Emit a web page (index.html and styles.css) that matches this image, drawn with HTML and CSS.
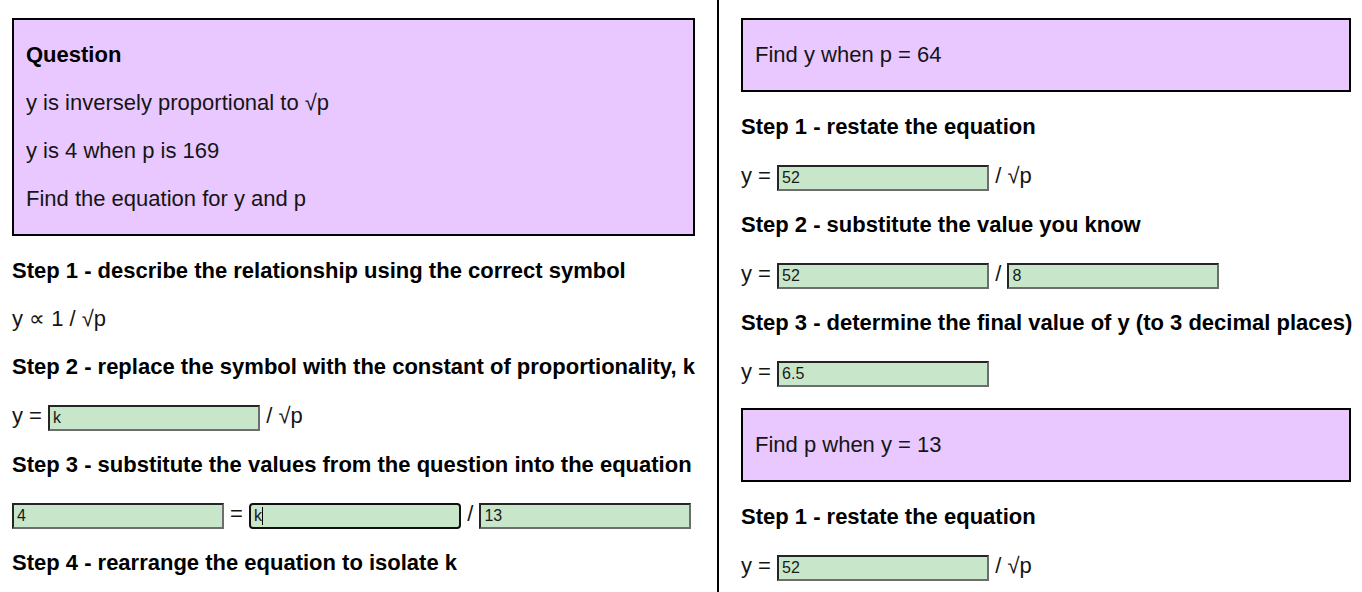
FILE: index.html
```html
<!DOCTYPE html>
<html>
<head>
<meta charset="utf-8">
<title>Inverse proportion</title>
<link rel="stylesheet" href="styles.css">
</head>
<body>
<div class="page">
  <div class="col col-left">
    <div class="box">
      <p class="title">Question</p>
      <p>y is inversely proportional to √p</p>
      <p>y is 4 when p is 169</p>
      <p>Find the equation for y and p</p>
    </div>
    <p class="step">Step 1 - describe the relationship using the correct symbol</p>
    <p>y ∝ 1 / √p</p>
    <p class="step">Step 2 - replace the symbol with the constant of proportionality, k</p>
    <p class="row">y = <input class="field" type="text" value="k"> / √p</p>
    <p class="step">Step 3 - substitute the values from the question into the equation</p>
    <p class="row"><input class="field" type="text" value="4"> = <span class="wrap"><input class="field focus" type="text" value="k"><span class="caret"></span></span> / <input class="field" type="text" value="13"></p>
    <p class="step">Step 4 - rearrange the equation to isolate k</p>
  </div>
  <div class="divider"></div>
  <div class="col col-right">
    <div class="box">
      <p>Find y when p = 64</p>
    </div>
    <p class="step">Step 1 - restate the equation</p>
    <p class="row">y = <input class="field" type="text" value="52"> / √p</p>
    <p class="step">Step 2 - substitute the value you know</p>
    <p class="row">y = <input class="field" type="text" value="52"> / <input class="field" type="text" value="8"></p>
    <p class="step">Step 3 - determine the final value of y (to 3 decimal places)</p>
    <p class="row">y = <input class="field" type="text" value="6.5"></p>
    <div class="box">
      <p>Find p when y = 13</p>
    </div>
    <p class="step">Step 1 - restate the equation</p>
    <p class="row">y = <input class="field" type="text" value="52"> / √p</p>
  </div>
</div>
</body>
</html>
```

FILE: styles.css
```css
html, body {
  margin: 0;
  padding: 0;
  background: #fff;
}
body {
  font-family: "Liberation Sans", Arial, sans-serif;
  font-size: 22px;
  line-height: 26px;
  color: #151515;
  overflow: hidden;
}
.page {
  display: flex;
  height: 592px;
  overflow: hidden;
}
.col {
  padding-top: 18px;
  flex: none;
}
.col-left {
  width: 683px;
  margin-left: 12px;
}
.col-right {
  width: 610px;
}
.divider {
  flex: none;
  width: 2px;
  background: #000;
  margin: 0 22px;
}
.box {
  background: #e9c8ff;
  border: 2px solid #000;
  padding: 0 12px;
}
.box p {
  margin: 22px 0;
}
p {
  margin: 22px 0;
  white-space: nowrap;
}
.row {
  height: 28px;
  line-height: 28px;
}
.title, .step {
  font-weight: bold;
  color: #000;
}
.field {
  box-sizing: border-box;
  width: 212px;
  height: 26px;
  margin: 2px 0 0 0;
  padding: 1px 3px;
  font-family: "Liberation Sans", Arial, sans-serif;
  font-size: 16px;
  line-height: 20px;
  color: #1a1a1a;
  background: #c8e6c9;
  border-style: solid;
  border-width: 2px;
  border-color: #252525 #6d6d6d #6d6d6d #252525;
  vertical-align: middle;
}
.field.focus {
  border-color: #101010;
  border-radius: 4px;
}
.wrap {
  position: relative;
  display: inline-block;
  vertical-align: middle;
  line-height: 0;
}
.caret {
  position: absolute;
  left: 13px;
  top: 6px;
  width: 1px;
  height: 18px;
  background: #000;
}
```
